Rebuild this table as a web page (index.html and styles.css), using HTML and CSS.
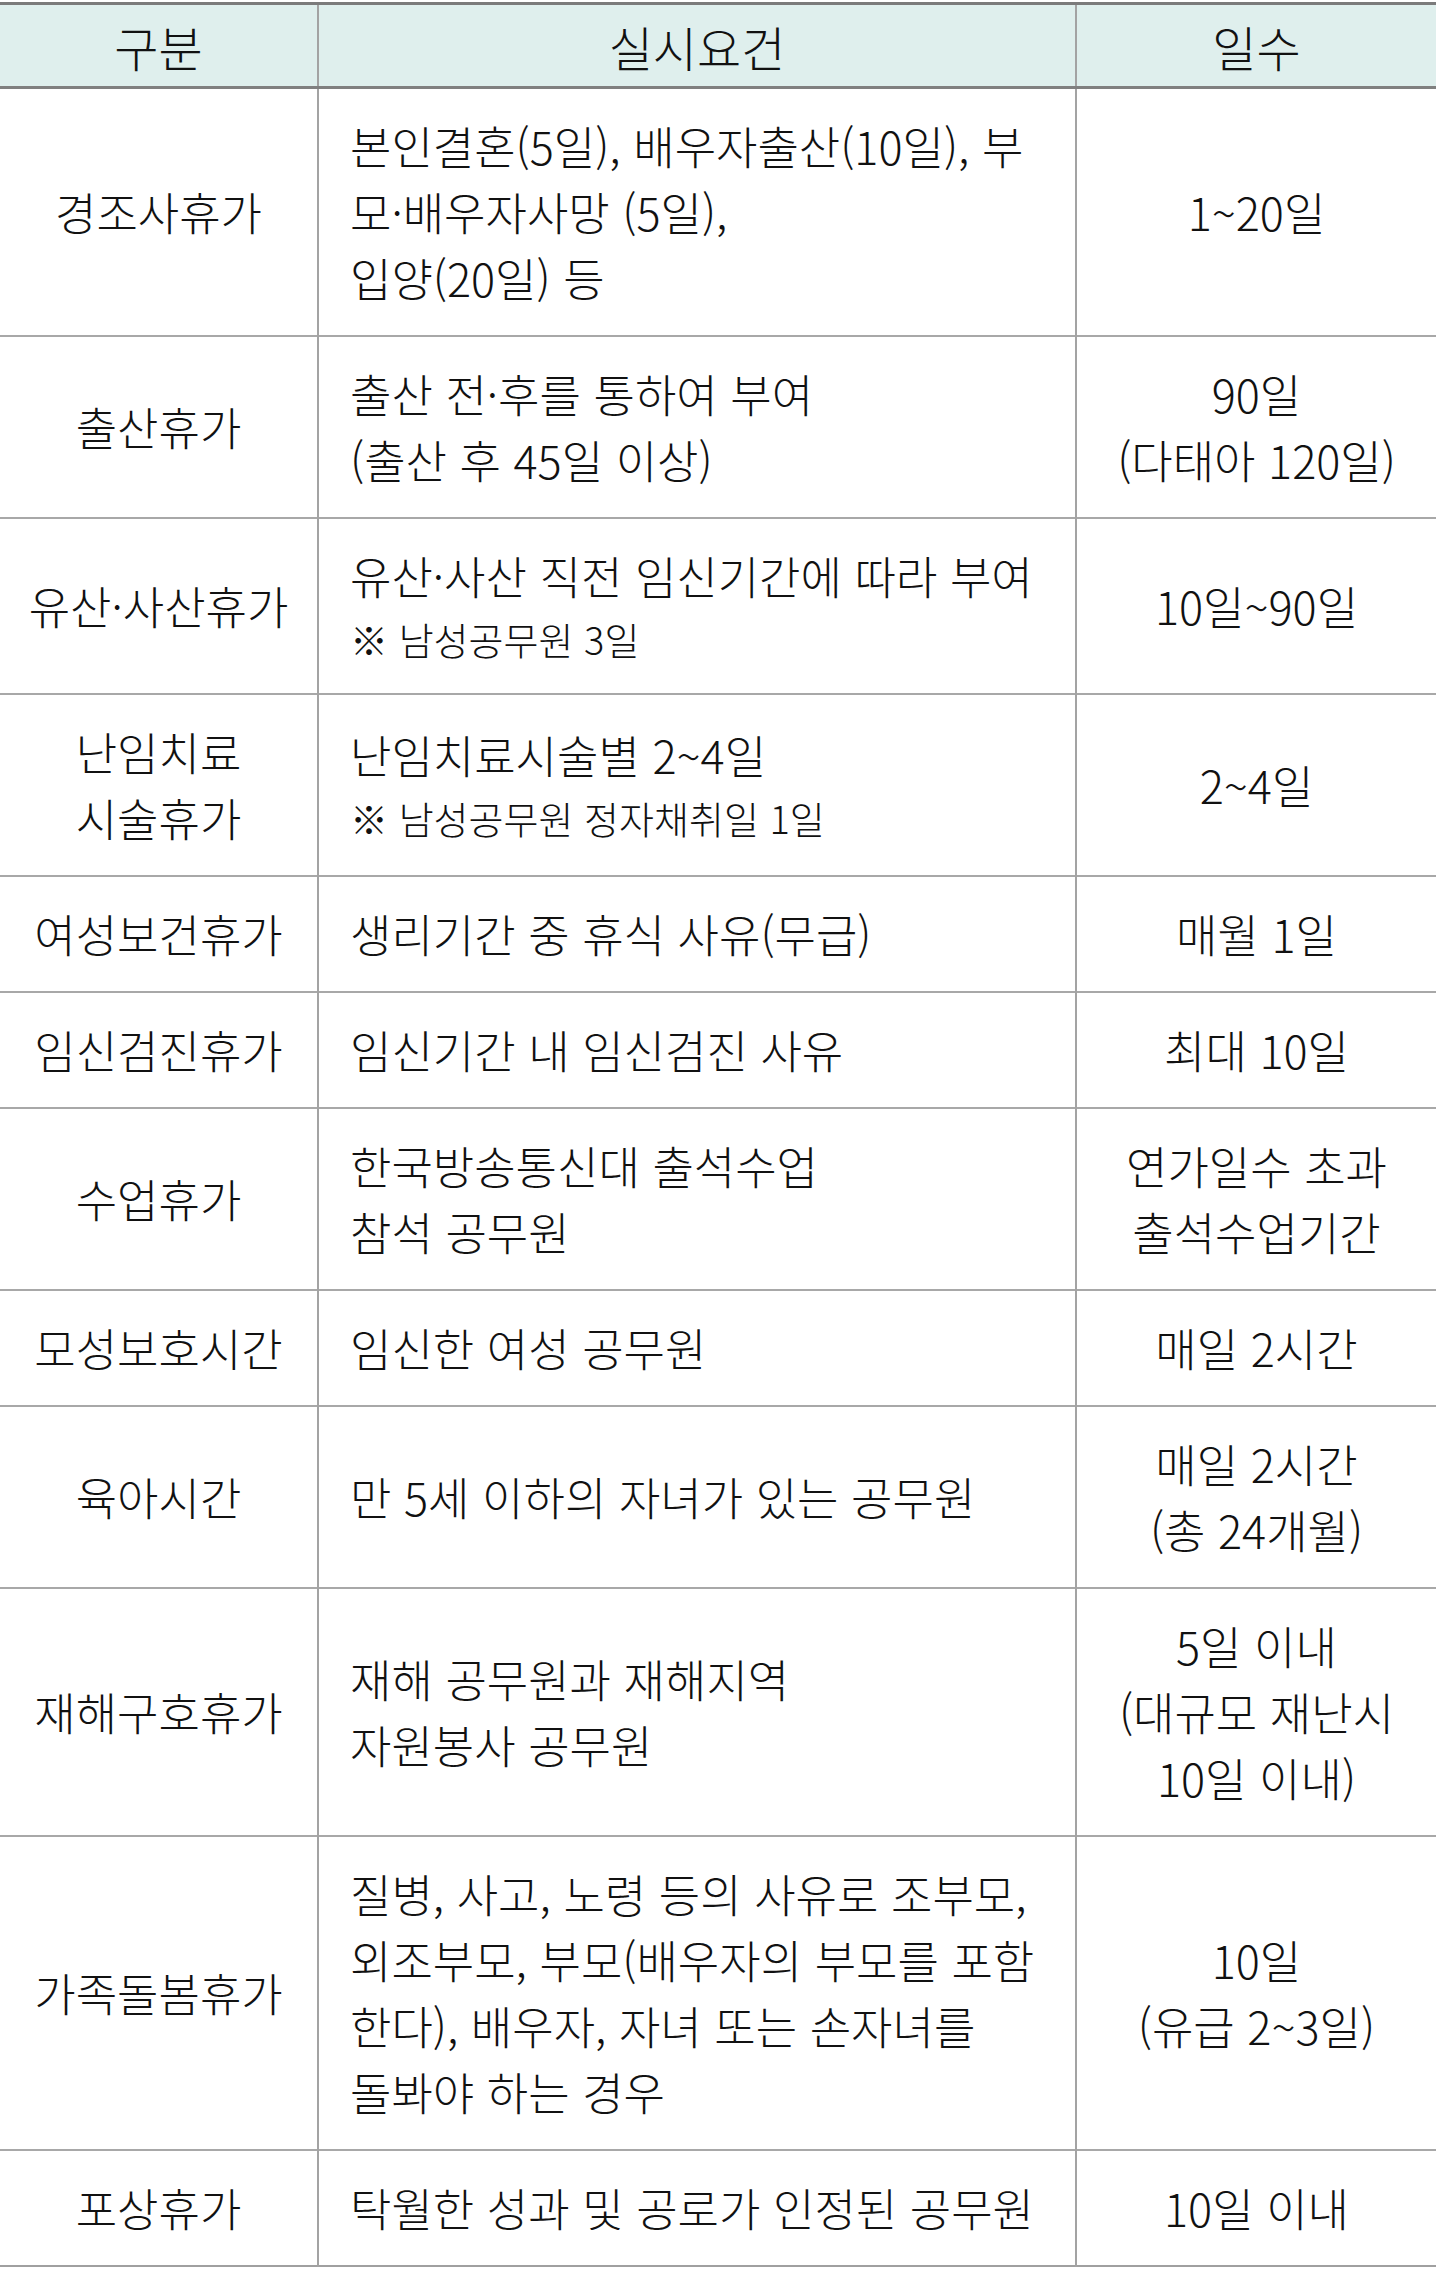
FILE: index.html
```html
<!DOCTYPE html>
<html lang="ko">
<head>
<meta charset="utf-8">
<title>휴가 제도</title>
<link rel="stylesheet" href="styles.css">
</head>
<body>
<table class="leave">
  <colgroup>
    <col class="c1">
    <col class="c2">
    <col class="c3">
  </colgroup>
  <thead>
    <tr>
      <th>구분</th>
      <th>실시요건</th>
      <th>일수</th>
    </tr>
  </thead>
  <tbody>
    <tr>
      <td class="name">경조사휴가</td>
      <td class="cond">본인결혼(5일), 배우자출산(10일), 부<br>모·배우자사망 (5일),<br>입양(20일) 등</td>
      <td class="days">1~20일</td>
    </tr>
    <tr>
      <td class="name">출산휴가</td>
      <td class="cond">출산 전·후를 통하여 부여<br>(출산 후 45일 이상)</td>
      <td class="days">90일<br>(다태아 120일)</td>
    </tr>
    <tr>
      <td class="name">유산·사산휴가</td>
      <td class="cond">유산·사산 직전 임신기간에 따라 부여<span class="note">※ 남성공무원 3일</span></td>
      <td class="days">10일~90일</td>
    </tr>
    <tr>
      <td class="name">난임치료<br>시술휴가</td>
      <td class="cond">난임치료시술별 2~4일<span class="note">※ 남성공무원 정자채취일 1일</span></td>
      <td class="days">2~4일</td>
    </tr>
    <tr>
      <td class="name">여성보건휴가</td>
      <td class="cond">생리기간 중 휴식 사유(무급)</td>
      <td class="days">매월 1일</td>
    </tr>
    <tr>
      <td class="name">임신검진휴가</td>
      <td class="cond">임신기간 내 임신검진 사유</td>
      <td class="days">최대 10일</td>
    </tr>
    <tr>
      <td class="name">수업휴가</td>
      <td class="cond">한국방송통신대 출석수업<br>참석 공무원</td>
      <td class="days">연가일수 초과<br>출석수업기간</td>
    </tr>
    <tr>
      <td class="name">모성보호시간</td>
      <td class="cond">임신한 여성 공무원</td>
      <td class="days">매일 2시간</td>
    </tr>
    <tr>
      <td class="name">육아시간</td>
      <td class="cond">만 5세 이하의 자녀가 있는 공무원</td>
      <td class="days">매일 2시간<br>(총 24개월)</td>
    </tr>
    <tr>
      <td class="name">재해구호휴가</td>
      <td class="cond">재해 공무원과 재해지역<br>자원봉사 공무원</td>
      <td class="days">5일 이내<br>(대규모 재난시<br>10일 이내)</td>
    </tr>
    <tr>
      <td class="name">가족돌봄휴가</td>
      <td class="cond">질병, 사고, 노령 등의 사유로 조부모,<br>외조부모, 부모(배우자의 부모를 포함<br>한다), 배우자, 자녀 또는 손자녀를<br>돌봐야 하는 경우</td>
      <td class="days">10일<br>(유급 2~3일)</td>
    </tr>
    <tr>
      <td class="name">포상휴가</td>
      <td class="cond">탁월한 성과 및 공로가 인정된 공무원</td>
      <td class="days">10일 이내</td>
    </tr>
  </tbody>
</table>
</body>
</html>
```

FILE: styles.css
```css
html, body {
  margin: 0;
  padding: 0;
  background: #ffffff;
}

body {
  font-family: "Noto Sans CJK KR", "Noto Sans", sans-serif;
  font-weight: 300;
  color: #111111;
  padding-top: 2px;
}

.leave {
  width: 1436px;
  border-collapse: collapse;
  table-layout: fixed;
  border-top: 3px solid #7b7b7b;
  border-bottom: 2px solid #a0a0a0;
}

.c1 { width: 318px; }
.c2 { width: 758px; }
.c3 { width: 360px; }

.leave th,
.leave td {
  font-size: 45px;
  line-height: 66px;
  white-space: nowrap;
  vertical-align: middle;
  border-left: 2px solid #a3a3a3;
  border-top: 2px solid #a8a8a8;
  padding: 24px 0 24px 0;
}

.leave th:first-child,
.leave td:first-child {
  border-left: none;
}

.leave th {
  background: #dfefed;
  font-size: 48px;
  font-weight: 300;
  text-align: center;
  padding: 8px 0 7px 0;
  border-top: none;
  border-bottom: 3px solid #808080;
}

.leave tbody tr:first-child td {
  border-top: none;
}

.name {
  text-align: center;
}

.cond {
  text-align: left;
  padding-left: 31px !important;
}

.days {
  text-align: center;
}

.note {
  display: block;
  font-size: 38px;
  line-height: 60px;
}
```
